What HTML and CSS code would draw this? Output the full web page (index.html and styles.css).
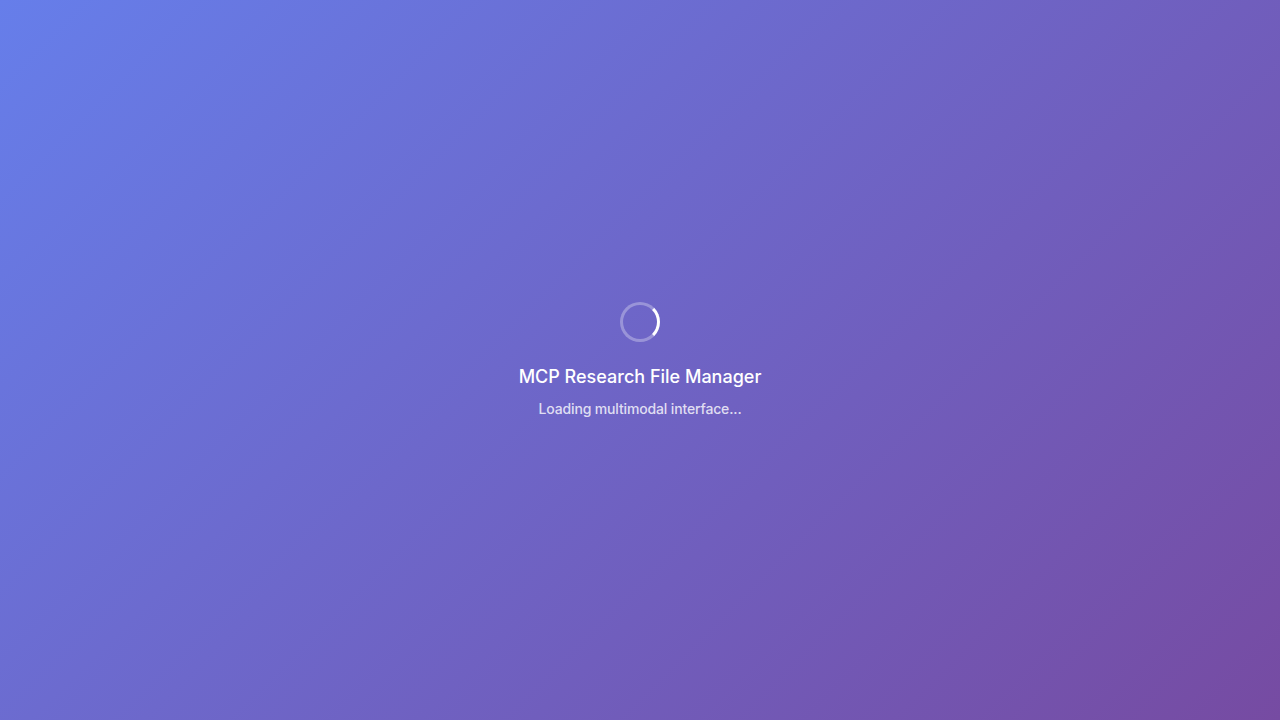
FILE: index.html
```html
<!DOCTYPE html>
<html lang="en">
<head>
<meta charset="utf-8">
<title>MCP Research File Manager</title>
<link rel="stylesheet" href="styles.css">
</head>
<body>
<div class="loading-screen">
  <div class="spinner"></div>
  <h1 class="loading-title">MCP Research File Manager</h1>
  <p class="loading-subtitle">Loading multimodal interface...</p>
</div>
</body>
</html>
```
FILE: styles.css
```css
html, body {
  margin: 0;
  padding: 0;
  height: 100%;
}
body {
  font-family: Inter, "Noto Sans", sans-serif;
  background: linear-gradient(135deg, #667eea 0%, #764ba2 100%);
  color: #fff;
}
.loading-screen {
  height: 100vh;
  display: flex;
  flex-direction: column;
  align-items: center;
  justify-content: center;
  text-align: center;
}
.spinner {
  width: 40px;
  height: 40px;
  box-sizing: border-box;
  border: 3px solid rgba(255, 255, 255, 0.3);
  border-right-color: #fff;
  border-radius: 50%;
}
.loading-title {
  margin: 21px 0 0;
  font-size: 18px;
  line-height: 27px;
  font-weight: 500;
}
.loading-subtitle {
  margin: 8px 0 0;
  font-size: 14px;
  line-height: 21px;
  font-weight: 500;
  letter-spacing: -0.15px;
  color: rgba(255, 255, 255, 0.8);
}
```
